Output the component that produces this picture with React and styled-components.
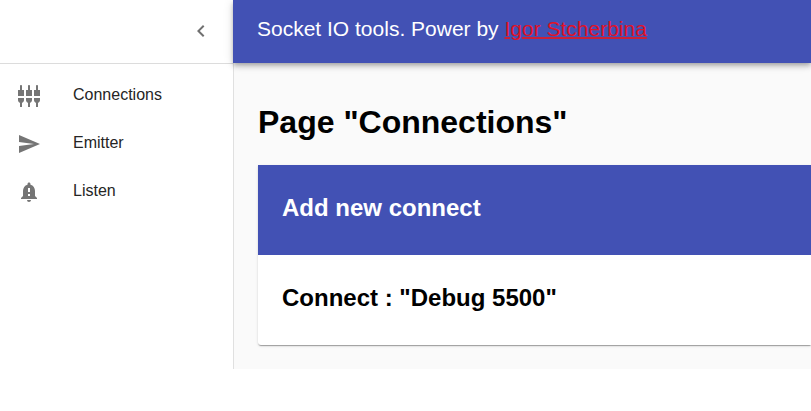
import React from "react";
import styled, { createGlobalStyle } from "styled-components";
import { MdChevronLeft, MdSettingsInputComponent, MdSend, MdNotificationImportant } from "react-icons/md";

const GlobalStyle = createGlobalStyle`
  * { box-sizing: border-box; }
  body { margin: 0; background: #fff; overflow: hidden; font-family: "Liberation Sans", Arial, sans-serif; }
`;

const Layout = styled.div`
  display: flex;
  height: 369px;
  width: 100%;
  overflow: hidden;
`;

const Drawer = styled.aside`
  flex: 0 0 234px;
  border-right: 1px solid #e0e0e0;
  background: #fff;
`;

const DrawerHeader = styled.div`
  height: 64px;
  display: flex;
  align-items: center;
  justify-content: flex-end;
  padding: 0 20px 2px 0;
  border-bottom: 1px solid #dcdcdc;
  color: #707070;
  font-size: 24px;
`;

const Menu = styled.nav`
  display: flex;
  flex-direction: column;
  padding-top: 8px;
`;

const MenuItem = styled.a`
  height: 48px;
  display: flex;
  align-items: center;
  padding-left: 17px;
  font-size: 16px;
  color: #252525;
`;

const MenuIcon = styled.span`
  width: 56px;
  display: flex;
  font-size: 24px;
  color: #757575;
`;

const MenuLabel = styled.span`
  line-height: 24px;
  margin-top: -2px;
`;

const Main = styled.main`
  flex: 1;
  min-width: 0;
  background: #fafafa;
`;

const AppBar = styled.header`
  height: 63px;
  margin-left: -1px;
  position: relative;
  padding: 13px 24px 0 24px;
  background: #4251b4;
  color: #fff;
  font-size: 21px;
  line-height: 32px;
  box-shadow: 0 2px 4px -1px rgba(0,0,0,.2), 0 4px 5px rgba(0,0,0,.14), 0 1px 10px rgba(0,0,0,.12);
`;

const AuthorLink = styled.a`
  color: #e01228;
  text-decoration: underline;
  text-decoration-thickness: 2px;
  text-decoration-color: #cc2036;
`;

const PageTitle = styled.h1`
  margin: 41px 0 0 24px;
  font-size: 32px;
  line-height: 37px;
`;

const Card = styled.section`
  margin: 24px 0 0 24px;
  height: 180px;
  background: #fff;
  border-radius: 0 0 0 3px;
  box-shadow: 0 2px 1px -1px rgba(0,0,0,.2), 0 1px 1px rgba(0,0,0,.14), 0 1px 3px rgba(0,0,0,.12);
`;

const CardRow = styled.div`
  height: 90px;
  display: flex;
  align-items: center;
  padding: 0 24px 4px;
  background: ${(p) => (p.$primary ? "#4251b4" : "transparent")};
  color: ${(p) => (p.$primary ? "#fff" : "#000")};
`;

const RowTitle = styled.h2`
  margin: 0;
  font-size: 24px;
  line-height: 28px;
`;

const items = [
  { label: "Connections", Icon: MdSettingsInputComponent },
  { label: "Emitter", Icon: MdSend },
  { label: "Listen", Icon: MdNotificationImportant },
];

export default function App() {
  return (
    <>
      <GlobalStyle />
      <Layout>
        <Drawer>
          <DrawerHeader><MdChevronLeft /></DrawerHeader>
          <Menu>
            {items.map(({ label, Icon }) => (
              <MenuItem key={label}>
                <MenuIcon><Icon /></MenuIcon>
                <MenuLabel>{label}</MenuLabel>
              </MenuItem>
            ))}
          </Menu>
        </Drawer>
        <Main>
          <AppBar>
            Socket IO tools. Power by <AuthorLink>Igor Stcherbina</AuthorLink>
          </AppBar>
          <PageTitle>Page "Connections"</PageTitle>
          <Card>
            <CardRow $primary><RowTitle>Add new connect</RowTitle></CardRow>
            <CardRow><RowTitle>Connect : "Debug 5500"</RowTitle></CardRow>
          </Card>
        </Main>
      </Layout>
    </>
  );
}
